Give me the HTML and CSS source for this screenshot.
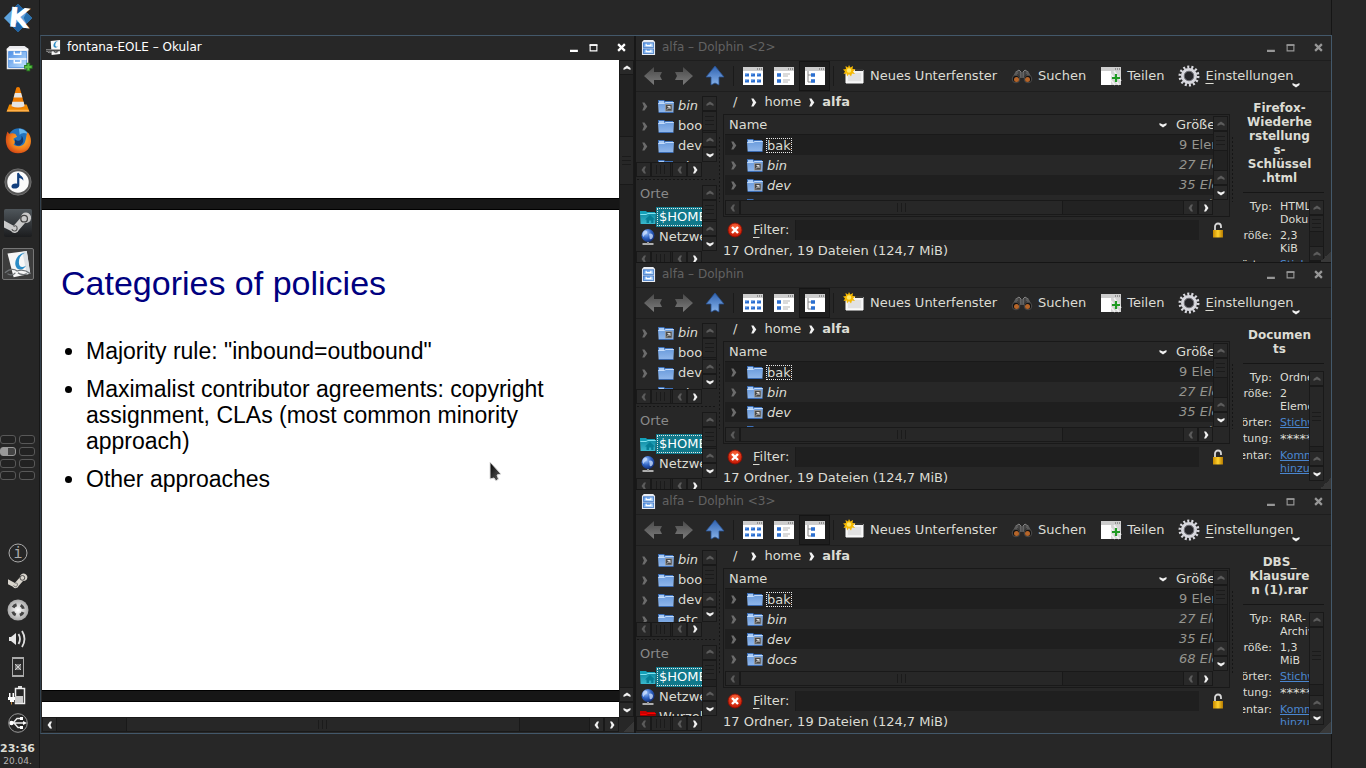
FILE: index.html
```html
<!DOCTYPE html>
<html lang="de">
<head>
<meta charset="utf-8">
<title>fontana-EOLE – Okular</title>
<link rel="stylesheet" href="styles.css">
</head>
<body>
<svg class="sprite" aria-hidden="true">
  <defs>
    <linearGradient id="gFolder" x1="0" y1="0" x2="0" y2="1"><stop offset="0" stop-color="#6a9bdc"/><stop offset="1" stop-color="#8fb6ea"/></linearGradient>
    <linearGradient id="gTeal" x1="0" y1="0" x2="0" y2="1"><stop offset="0" stop-color="#0f8ba3"/><stop offset="1" stop-color="#39b8cd"/></linearGradient>
    <linearGradient id="gUp" x1="0" y1="0" x2="0" y2="1"><stop offset="0" stop-color="#2f62b0"/><stop offset="1" stop-color="#86b2ea"/></linearGradient>
    <linearGradient id="gGrey" x1="0" y1="0" x2="0" y2="1"><stop offset="0" stop-color="#4a4a4a"/><stop offset="1" stop-color="#7c7c7c"/></linearGradient>
    <linearGradient id="gDrawer" x1="0" y1="0" x2="1" y2="1"><stop offset="0" stop-color="#4d8ee6"/><stop offset="1" stop-color="#c4e4ff"/></linearGradient>
    <linearGradient id="gGold" x1="0" y1="0" x2="1" y2="0"><stop offset="0" stop-color="#c98a00"/><stop offset=".5" stop-color="#ffd22e"/><stop offset="1" stop-color="#b57a00"/></linearGradient>
    <linearGradient id="gSteam" x1="0" y1="0" x2="0" y2="1"><stop offset="0" stop-color="#4f565b"/><stop offset="1" stop-color="#1b1c1e"/></linearGradient>
    <linearGradient id="gCursor" x1="0" y1="0" x2="1" y2="1"><stop offset="0" stop-color="#000"/><stop offset="1" stop-color="#666"/></linearGradient>
    <radialGradient id="gGlobe" cx=".35" cy=".3" r=".8"><stop offset="0" stop-color="#9fc6ff"/><stop offset=".5" stop-color="#2f63c4"/><stop offset="1" stop-color="#0b2468"/></radialGradient>
    <radialGradient id="gRed" cx=".5" cy=".3" r=".7"><stop offset="0" stop-color="#ff6a3c"/><stop offset="1" stop-color="#c01200"/></radialGradient>
    <radialGradient id="gFox" cx=".6" cy=".4" r=".7"><stop offset="0" stop-color="#ffc52e"/><stop offset=".6" stop-color="#f07a1c"/><stop offset="1" stop-color="#c93812"/></radialGradient>
    <radialGradient id="gSilver"><stop offset="0" stop-color="#fff"/><stop offset="1" stop-color="#a8a8a8"/></radialGradient>
  </defs>
  <symbol id="right" viewBox="0 0 8 8"><path d="M2 .5h2L6.500 4 4 7.500H2L3.500 4z" fill="currentColor"/></symbol>
  <symbol id="left" viewBox="0 0 8 8"><path d="M6 .5H4L1.500 4 4 7.500h2L4.500 4z" fill="currentColor"/></symbol>
  <symbol id="up" viewBox="0 0 8 8"><path d="M.5 6V4L4 1.500 7.500 4v2L4 4.500z" fill="currentColor"/></symbol>
  <symbol id="down" viewBox="0 0 8 8"><path d="M.5 2v2L4 6.500 7.500 4V2L4 3.500z" fill="currentColor"/></symbol>
  <symbol id="min" viewBox="0 0 8 8"><path d="M0 6h7v2H0z" fill="currentColor"/></symbol>
  <symbol id="max" viewBox="0 0 8 8"><path d="M1 2h6v5H1z" fill="none" stroke="currentColor"/><path d="M.5 1h7v1.500h-7z" fill="currentColor"/></symbol>
  <symbol id="close" viewBox="0 0 8 8"><path d="M1 1l6 6M7 1L1 7" stroke="currentColor" stroke-width="2"/></symbol>

  <symbol id="folder" viewBox="0 0 16 16"><path d="M0 2h6l1 1h8v3H0z" fill="#3d70b8"/><path d="M1 3h5v2H1z" fill="#a9cbf5"/><path d="M0 5h6l2-1h8l-.6 10H.6z" fill="url(#gFolder)"/><path d="M.3 5.500H6l2-1h7.700" stroke="#c3dcfb" fill="none"/><path d="M.6 14.500h15" stroke="#3a6ab0"/></symbol>
  <symbol id="folder-link" viewBox="0 0 16 16"><use href="#folder"/><rect x="7.500" y="6.500" width="6.500" height="6.500" fill="#4a4a4a" stroke="#999" stroke-width=".8"/><path d="M9 11.500l3-3M9.500 8.500H12V11" stroke="#ddd" fill="none"/></symbol>
  <symbol id="home" viewBox="0 0 16 16"><path d="M0 2h6l1 1h8v3H0z" fill="#14a0b8"/><path d="M0 5h6l2-1h8l-.6 11H.6z" fill="url(#gTeal)"/><path d="M.3 5.500H6l2-1h7.700" stroke="#7fe2ef" fill="none"/><path d="M10 6l5 4.500h-1.500V14h-2.300v-2.500H9V14H6.500v-3.500H5z" fill="#067e95"/></symbol>
  <symbol id="globe" viewBox="0 0 16 16"><circle cx="8" cy="6.500" r="6.500" fill="url(#gGlobe)"/><path d="M4 2c2-1 4 0 3 2s-3 1-3 4c-2-1-2-4 0-6zM9 5c2-1 4 0 4 2s-2 4-3 3 0-2-1-5z" fill="#cfe2ff" opacity=".75"/><path d="M2.500 15h11" stroke="#ddd" stroke-width="1.500"/><path d="M8 13v2" stroke="#999" stroke-width="2"/></symbol>
  <symbol id="root" viewBox="0 0 16 16"><path d="M0 2h6l1 1h8v3H0z" fill="#c00"/><path d="M0 5h6l2-1h8l-.6 10H.6z" fill="#9c0000"/><path d="M.3 5.500H6l2-1h7.700" stroke="#f00" fill="none"/></symbol>
  <symbol id="cabinet" viewBox="0 0 16 16"><path d="M3 0h10l2 2v14H1V2z" fill="#e9edf3"/><rect x="2.500" y="3" width="11" height="5" fill="url(#gDrawer)" stroke="#3c74c2" stroke-width=".8"/><rect x="2.500" y="9.500" width="11" height="5" fill="url(#gDrawer)" stroke="#3c74c2" stroke-width=".8"/><path d="M5.500 4v2h5V4M5.500 10.500v2h5v-2" stroke="#fff" stroke-width="1.300" fill="none"/></symbol>
  <symbol id="okular" viewBox="0 0 32 32"><path d="M4 4l22-3 4 26-19 4z" fill="#f7f7f7"/><path d="M26 1l4 26-4 .7L21 2z" fill="#dbe0e4"/><path d="M24 3C14 4 10 16 15 21c4 3 9 0 10-3-5 3-8 1-8-4 0-6 3-9 7-11z" fill="#2b8cc6"/><path d="M1 26c5-4 10-5 14-2 5-2 10-1 15 3M4 27c2 2 7 2 9-1M16 26c2 2 7 3 10 1" stroke="#6f7376" stroke-width="1.500" fill="none"/></symbol>
  <symbol id="okular-small" viewBox="0 0 16 16"><path d="M5 1l10-1v15l-9 1z" fill="#f7f7f7"/><path d="M13 1C9 1 7 5 8.500 7.500 10 9 12 8 12.500 7c-2 .5-3-.5-2.500-2.500.3-2 1.500-3 3-3.500z" fill="#2b8cc6"/><path d="M0 11h15M2 11q2 4 4.500 0M8 11q2.500 4 5 0" stroke="#aaa" stroke-width="2.400" fill="none"/><path d="M0 11h15M2 11q2 4 4.500 0M8 11q2.500 4 5 0" stroke="#333" fill="none"/></symbol>
  <symbol id="steamarm" viewBox="0 0 32 32"><path d="M0 13l11 6 8-9a6 6 0 1 1 5 6l-7 8a5 5 0 0 1-9 1L0 21z" fill="currentColor"/><circle cx="23" cy="11" r="3.800" fill="none" stroke="#444" stroke-width="1.500"/><path d="M9 23c1 3 6 3 6-1s-3-3-4-2" fill="none" stroke="#555" stroke-width="1.300"/></symbol>

  <symbol id="t-back" viewBox="0 0 22 22"><path d="M2 11l10-9v5h8l-2 4 2 4h-8v5z" fill="url(#gGrey)"/></symbol>
  <symbol id="t-forward" viewBox="0 0 22 22"><path d="M20 11L10 2v5H2l2 4-2 4h8v5z" fill="url(#gGrey)"/></symbol>
  <symbol id="t-up" viewBox="0 0 22 22"><path d="M11 1l9 11h-5v8l-4-2-4 2v-8H2z" fill="url(#gUp)" stroke="#274f8e" stroke-width=".8"/></symbol>
  <symbol id="pane" viewBox="0 0 22 22"><path d="M1 2h20v18H1z" fill="#fff"/><path d="M1 2h20v4H1z" fill="#cdcdcd"/><path d="M15 4h1m1 0h1m1 0h1" stroke="#555"/></symbol>
  <symbol id="t-icons" viewBox="0 0 22 22"><use href="#pane"/><path d="M3 10h4m2 0h4m2 0h4M3 16h4m2 0h4m2 0h4" stroke="#2b6fd0" stroke-width="3"/><path d="M3 9h2m4 0h2m4 0h2M3 15h2m4 0h2m4 0h2" stroke="#79aef2"/></symbol>
  <symbol id="t-list" viewBox="0 0 22 22"><use href="#pane"/><path d="M4 10h4m-4 6h4" stroke="#2b6fd0" stroke-width="3.500"/><path d="M10 9h7m-7 2h5m-5 4h7m-7 2h5" stroke="#b5b5b5"/></symbol>
  <symbol id="t-tree" viewBox="0 0 22 22"><use href="#pane"/><path d="M4 6v11h3M4 10h3" stroke="#888" fill="none"/><path d="M7 10h4m-4 6h4" stroke="#2b6fd0" stroke-width="3.500"/></symbol>
  <symbol id="t-newtab" viewBox="0 0 22 22"><path d="M3 5h17v13H3z" fill="#f3f3f3" stroke="#fff"/><path d="M12 4h8v2h-8z" fill="#333"/><path d="M5 8h13v8H5z" fill="#e2e2e2"/><path d="M6 0l1.300 2.500L10 1l-.5 3 3 .5L10 6.500l2 2.500-3-.5L8 11.500 6 9 4 11.500 3.500 8.500l-3 .5L2 6.500 0 4.500 3 4l-.5-3L5 2.500z" fill="#f5b800"/><circle cx="6" cy="5.500" r="2.200" fill="#ffe76a"/></symbol>
  <symbol id="t-find" viewBox="0 0 22 22"><path d="M5 7l3-2 2 2v6M17 7l-3-2-2 2v6" fill="#444" stroke="#858585"/><path d="M6 7L3 13M16 7l3 6" stroke="#5d5d5d" stroke-width="3"/><circle cx="5" cy="14" r="3.800" fill="#111" stroke="#4c4c4c"/><circle cx="17" cy="14" r="3.800" fill="#111" stroke="#4c4c4c"/><circle cx="5.500" cy="14.500" r="2.500" fill="#b5652a"/><circle cx="16.500" cy="14.500" r="2.500" fill="#b5652a"/></symbol>
  <symbol id="t-split" viewBox="0 0 22 22"><use href="#pane"/><path d="M11 6h10v14H11z" fill="#d5d5d5"/><path d="M11 9l8 11M14 6l7 10M11 15l4 5" stroke="#f2f2f2" stroke-width="1.500"/><path d="M16 9v8m-4-4h8" stroke="#1f9a22" stroke-width="2.200"/></symbol>
  <symbol id="t-gear" viewBox="0 0 22 22"><circle cx="11" cy="11" r="9" fill="none" stroke="#d8d8de" stroke-width="3" stroke-dasharray="2.030 2.010"/><circle cx="11" cy="11" r="6.500" fill="#26262a" stroke="#d8d8de" stroke-width="3"/><circle cx="11" cy="11" r="4.800" fill="none" stroke="#77777d"/></symbol>
  <symbol id="stop" viewBox="0 0 16 16"><circle cx="8" cy="8" r="7" fill="url(#gRed)" stroke="#8d0c00" stroke-width=".8"/><path d="M5 5l6 6m0-6l-6 6" stroke="#fff" stroke-width="2.400"/></symbol>
  <symbol id="lock" viewBox="0 0 16 16"><path d="M5 9V4.500a3 3 0 0 1 6 0V6" fill="none" stroke="#d8d8d8" stroke-width="1.800"/><path d="M3 8h10v7.500H3z" fill="url(#gGold)"/></symbol>
</svg>

<div class="desktop">
  <nav class="panel" aria-label="Kontrollleiste">
    <div class="launchers">
      <button class="launch" aria-label="Startmenü"><svg viewBox="0 0 32 32"><path d="M16 1l15 15-15 15L1 16z" fill="#5da3dd"/><path d="M16 1l6 6-6 4-6-4zM16 31l6-6-6-5-6 5z" fill="#1c62a6"/><path d="M31 16l-6-6-3 6 3 6z" fill="#276fae"/><text x="6" y="26" class="k-logo" transform="rotate(6 16 16)">K</text></svg></button>
      <button class="launch" aria-label="Dateiverwaltung"><svg viewBox="0 0 32 32"><path d="M7 2h16l4 3v22H4V5z" fill="#e8e8ec"/><path d="M4 5h23v2H4z" fill="#fafafa"/><path d="M6 8h19v17H6z" fill="url(#gDrawer)" stroke="#5b97e2"/><path d="M6 16h19" stroke="#e6f1ff" stroke-width="2"/><path d="M12 8v3h7V8M12 17v3h7v-3" stroke="#fff" stroke-width="1.500" fill="none"/><path d="M27 20v9m-4.500-4.500h9" stroke="#2a7d22" stroke-width="4"/><path d="M27 21v7m-3.500-3.500h7" stroke="#58c043" stroke-width="2"/></svg></button>
      <button class="launch" aria-label="VLC"><svg viewBox="0 0 32 32"><path d="M6 21h20l3 8H3z" fill="#f08a00"/><path d="M4 27h24l1 2H3z" fill="#ffb04a"/><path d="M14 2q2-2 4 0l6 22q-8 4-16 0z" fill="#f07c00"/><path d="M12.500 8h7l1.500 5H11zM9.500 18h13l1 5q-7.500 3-15 0z" fill="#e4e4e4"/></svg></button>
      <button class="launch" aria-label="Firefox"><svg viewBox="0 0 32 32"><circle cx="17" cy="14" r="12.500" fill="#2373bd"/><path d="M17 2c5 0 9 3 10 6-4-2-7-1-9 1z" fill="#68b5ea"/><path d="M27 6c7 7 5 24-11 24C4 30 0 18 3 8l1-3 2 3c2-1 5-1 7 0l2 3-4 2c0 3 1 3 4 3-1 3-3 2-4 4 3 3 11 3 13-3 2-5 1-8 3-11z" fill="url(#gFox)"/><path d="M13 14c-2 5 0 8 5 7 5-2 5-8 2-11 1 5-4 8-7 4z" fill="#123a70"/></svg></button>
      <button class="launch" aria-label="Musik"><svg viewBox="0 0 32 32"><circle cx="16" cy="16" r="15" fill="#555" stroke="#777"/><circle cx="16" cy="16" r="12.300" fill="#fafafa"/><path d="M15 6l2-.5c1 4 6 4 5 9-1-2-3-3-4.500-3V20c0 4-9 5-9 1 0-3 4-4 6.500-3z" fill="#123f7d"/></svg></button>
      <button class="launch launch-steam" aria-label="Steam"><svg viewBox="0 0 32 32"><rect width="32" height="32" rx="2" fill="url(#gSteam)"/><use href="#steamarm"/></svg></button>
      <button class="launch launch-active" aria-label="Okular"><svg><use href="#okular"/></svg></button>
    </div>
    <div class="pager">
      <i></i><i></i><i class="pager-current"></i><i></i><i></i><i></i><i></i><i></i>
    </div>
    <div class="tray">
      <svg viewBox="0 0 20 20"><circle cx="10" cy="10" r="9" fill="none" stroke="#aaa"/><text x="10" y="15" class="info-glyph">i</text></svg>
      <svg viewBox="0 0 32 32" class="tray-steam"><use href="#steamarm"/></svg>
      <svg viewBox="0 0 22 22" class="tray-big"><circle cx="11" cy="11" r="10.500" fill="url(#gSilver)"/><circle cx="11" cy="11" r="5.500" fill="none" stroke="#444" stroke-width="3" stroke-dasharray="4.320 4.320" stroke-dashoffset="-2.160"/></svg>
      <svg viewBox="0 0 20 20"><path d="M1 8h2l5-4v12l-5-4H1z" fill="#e6e6e6"/><path d="M10.500 5q3 5 0 10M14 2q5 8 0 16" stroke="#ddd" stroke-width="1.800" fill="none"/></svg>
      <svg viewBox="0 0 20 20"><rect x="4.500" y=".5" width="11" height="19" fill="#2a2a2a" stroke="#aaa"/><path d="M4 18h12v2H4zM4 0h12v2H4z" fill="#aaa"/><path d="M7 7l6 6m0-6l-6 6M8 8h4v4H8z" stroke="#ccc" fill="none"/></svg>
      <svg viewBox="0 0 20 20"><path d="M7.500 3.500h9v15h-9z" fill="none" stroke="#eee" stroke-width="1.500"/><path d="M10 1h4v2h-4z" fill="#ddd"/><path d="M7 11h8v7H7z" fill="#ccc"/><path d="M0 12h7v3H6v2H2v-2H0zM1 8h1.500v4H1zM4.500 8H6v4H4.500z" fill="#fff"/><path d="M3.500 17v2.500" stroke="#c78b3c"/></svg>
      <svg viewBox="0 0 20 20"><circle cx="10" cy="10" r="9.300" fill="none" stroke="#999"/><path d="M2 10h14M5 10l4-4.500h3M6 10l4 4.500h3" stroke="#eee" stroke-width="1.400" fill="none"/><circle cx="3.500" cy="10" r="2.200" fill="#fff"/><path d="M15 8l4 2-4 2zM12 4h3v3h-3zM12 13h3v3h-3z" fill="#fff"/></svg>
    </div>
    <div class="clock"><time class="clock-time">23:36</time><span class="clock-date">20.04.</span></div>
  </nav>

  <main class="workspace">
    <section class="window okular" aria-label="Okular">
      <header class="titlebar">
        <svg class="title-icon"><use href="#okular-small"/></svg>
        <h1 class="title-text">fontana-EOLE – Okular</h1>
        <button class="winbtn" aria-label="Minimieren"><svg><use href="#min"/></svg></button>
        <button class="winbtn" aria-label="Maximieren"><svg><use href="#max"/></svg></button>
        <button class="winbtn winbtn-close" aria-label="Schließen"><svg><use href="#close"/></svg></button>
      </header>
      <div class="okular-body">
        <div class="pages">
          <div class="page"></div>
          <article class="page page-current">
            <h2 class="slide-title">Categories of policies</h2>
            <ul class="slide-list">
              <li>Majority rule: "inbound=outbound"</li>
              <li>Maximalist contributor agreements: copyright assignment, CLAs (most common minority approach)</li>
              <li>Other approaches</li>
            </ul>
          </article>
          <div class="page"></div>
          <svg class="cursor" viewBox="0 0 14 22"><path d="M1 1l11 12-4 1 1.500 4L7 20l-2-3-4 1z" fill="url(#gCursor)" stroke="#ddd"/></svg>
        </div>
        <div class="sb sb-v">
          <button class="on" aria-label="Nach oben"><svg><use href="#up"/></svg></button>
          <div class="trough"><i style="flex-basis:10%"></i><b style="flex-basis:8%"></b></div>
          <button class="on" aria-label="Nach oben"><svg><use href="#up"/></svg></button>
          <button class="on" aria-label="Nach unten"><svg><use href="#down"/></svg></button>
        </div>
        <div class="sb sb-h">
          <button class="on" aria-label="Nach links"><svg><use href="#left"/></svg></button>
          <div class="trough"><i style="flex-basis:13%"></i><b style="flex-basis:74%"></b></div>
          <button class="on" aria-label="Nach links"><svg><use href="#left"/></svg></button>
          <button class="on" aria-label="Nach rechts"><svg><use href="#right"/></svg></button>
        </div>
        <span class="grip"></span>
      </div>
    </section>
    <div class="dolphins" id="dolphins"></div>
  </main>
</div>
<script src="app.js"></script>
</body>
</html>
```
FILE: app.js
```js
const icon = (name, cls = '') => `<svg class="${cls}"><use href="#${name}"/></svg>`;

function scrollbar(dir, thumb) {
  const [less, more] = dir === 'v' ? ['up', 'down'] : ['left', 'right'];
  const size = thumb ? ` style="flex-basis:${thumb}%"` : '';
  return `<div class="sb sb-${dir}">
    <button aria-label="Zurück">${icon(less)}</button>
    <div class="trough"><b${size}></b></div>
    <button aria-label="Zurück">${icon(less)}</button>
    <button class="on" aria-label="Weiter">${icon(more)}</button>
  </div>`;
}

const tools = [['t-back', 'Zurück'], ['t-forward', 'Vorwärts'], ['t-up', 'Aufwärts'], null,
  ['t-icons', 'Symbole'], ['t-list', 'Kompakt'], ['t-tree', 'Details', 'tool-pressed'], null];
const labelled = [['t-newtab', 'Neues Unterfenster'], ['t-find', 'Suchen'], ['t-split', 'Teilen'],
  ['t-gear', '<u>E</u>instellungen']];
const tree = [['bin', 'folder-link'], ['boot', 'folder'], ['dev', 'folder'], ['etc', 'folder']];
const places = [['$HOME', 'home'], ['Netzwerk', 'globe'], ['Wurzel', 'root']];
const files = [['bak', '9 Elemente'], ['bin', '27 Elemente'], ['dev', '35 Elemente'], ['docs', '68 Elemente']];

const windows = [
  { title: 'alfa – Dolphin <2>', name: ['Firefox-', 'Wiederhe', 'rstellung', 's-', 'Schlüssel', '.html'],
    type: ['HTML-', 'Dokument'], size: ['2,3', 'KiB'], thumb: 56 },
  { title: 'alfa – Dolphin', name: ['Documen', 'ts'], type: ['Ordner'], size: ['2', 'Elemente'], thumb: 94 },
  { title: 'alfa – Dolphin <3>', name: ['DBS_', 'Klausure', 'n (1).rar'],
    type: ['RAR-', 'Archiv'], size: ['1,3', 'MiB'], thumb: 86 },
];

const escape = s => s.replace(/</g, '&lt;').replace(/>/g, '&gt;');

function dolphin(w, n) {
  const facts = [['Typ:', w.type.join('<br>')], ['Größe:', w.size.join('<br>')],
    ['Stichwörter:', '<a href="#">Stichwörter</a>'], ['Bewertung:', '<span class="stars">*****</span>'],
    ['Kommentar:', '<a href="#">Kommentar<br>hinzufügen</a>']];
  return `<section class="window dolphin" aria-label="${escape(w.title)}">
  <header class="titlebar">
    ${icon('cabinet', 'title-icon')}
    <h2 class="title-text">${escape(w.title)}</h2>
    <button class="winbtn" aria-label="Minimieren">${icon('min')}</button>
    <button class="winbtn" aria-label="Maximieren">${icon('max')}</button>
    <button class="winbtn winbtn-close" aria-label="Schließen">${icon('close')}</button>
  </header>
  <div class="toolbar">
    ${tools.map(t => t ? `<button class="tool ${t[2] || ''}" aria-label="${t[1]}">${icon(t[0])}</button>`
      : '<span class="tool-sep"></span>').join('')}
    ${labelled.map(t => `<button class="tool tool-labelled">${icon(t[0])}<span>${t[1]}</span></button>`).join('')}
    ${icon('down', 'tool-more')}
  </div>
  <div class="dolphin-body">
    <aside class="side">
      <div class="side-pane">
        <ul class="tree">${tree.map(([t, i]) => `<li class="${i}">${icon('right', 'twist')}${icon(i, 'ico')}<span>${t}</span></li>`).join('')}</ul>
        ${scrollbar('v')}
      </div>
      ${scrollbar('h')}
      <div class="dots-h"></div>
      <div class="side-pane">
        <div class="places"><h3>Orte</h3><ul>${places.map(([t, i]) => `<li class="${i}">${icon(i, 'ico')}<span>${t}</span></li>`).join('')}</ul></div>
        ${scrollbar('v')}
      </div>
      ${scrollbar('h')}
    </aside>
    <div class="dots-v"></div>
    <div class="centre">
      <nav class="crumbs"><a href="#">/</a>${icon('right')}<a href="#">home</a>${icon('right')}<a href="#" class="here">alfa</a></nav>
      <div class="view">
        <div class="rows"><table>
          <thead><tr><th>Name ${icon('down')}</th><th class="size">Größe</th></tr></thead>
          <tbody>${files.map(([f, s], i) => `<tr class="${i ? 'linked' : ''}"><td><div class="cell">${icon('right', 'twist')}${icon(i ? 'folder-link' : 'folder', 'ico')}<span class="fname">${f}</span></div></td><td class="size">${s}</td></tr>`).join('')}</tbody>
        </table></div>
        ${scrollbar('v')}
        ${scrollbar('h', 73)}
      </div>
      <div class="filter">
        <button aria-label="Filter schließen">${icon('stop')}</button>
        <label for="filter${n}"><u>F</u>ilter:</label>
        <input type="text" id="filter${n}">
        <button aria-label="Filter beibehalten">${icon('lock')}</button>
      </div>
      <p class="status">17 Ordner, 19 Dateien (124,7 MiB)</p>
    </div>
    <div class="dots-v"></div>
    <aside class="info">
      <h3>${w.name.join('<br>')}</h3>
      <div class="facts">
        <dl>${facts.map(([k, v]) => `<dt><span>${k}</span></dt><dd>${v}</dd>`).join('')}</dl>
        ${scrollbar('v', w.thumb)}
      </div>
    </aside>
  </div>
  <span class="grip"></span>
</section>`;
}

document.getElementById('dolphins').innerHTML = windows.map(dolphin).join('');
```
FILE: styles.css
```css
* { box-sizing: border-box; }
html, body { height: 100%; margin: 0; }
body {
  background: #272727;
  color: #dcdcd4;
  font: 13px/20px "DejaVu Sans", sans-serif;
  overflow: hidden;
}
h1, h2, h3, p, ul, dl, dd { margin: 0; padding: 0; font: inherit; }
ul { list-style: none; }
button { margin: 0; padding: 0; border: 0; background: none; color: inherit; font: inherit; }
svg { display: block; flex: none; }
a { color: inherit; text-decoration: none; }
u { text-underline-offset: 3px; }
.sprite { position: absolute; width: 0; height: 0; }

.desktop {
  display: grid;
  grid-template: minmax(0, 1fr) / 40px minmax(0, 1fr) 34px;
  height: 100vh;
  background: linear-gradient(#151515, #151515) right 34px top 0 / 1px 100% no-repeat;
}

/* Panel */
.panel {
  display: flex;
  flex-direction: column;
  align-items: center;
  padding: 2px 4px 0 0;
  background: #262626;
  border-right: 1px solid #171717;
}
.launchers { display: flex; flex-direction: column; gap: 9px; align-items: center; }
.launch { width: 32px; height: 32px; padding: 1px; }
.launch svg { width: 30px; height: 30px; }
.launch:nth-child(n+3):not(.launch-active) svg { width: 28px; height: 28px; margin: 0 1px; }
.launch-steam { color: #c9c9c9; }
.launch-active { border: 1px solid #777; border-radius: 2px; background: #3d3d3d; }
.launch-active svg { width: 28px; height: 28px; }
.k-logo { font: bold 29px "DejaVu Sans", sans-serif; fill: #fff; }
.pager { display: grid; grid-template-columns: 16px 16px; grid-auto-rows: 9px; gap: 3px; margin-top: 155px; }
.pager i { border: 1px solid #585858; border-radius: 3px; background: #222; }
.pager .pager-current { border-color: #999; background: linear-gradient(90deg, #999 50%, #444 50%); }
.tray { display: flex; flex-direction: column; align-items: center; gap: 8px; margin-top: auto; }
.tray svg { width: 20px; height: 20px; }
.tray .tray-big { width: 22px; height: 22px; }
.tray-steam { color: #d8d4cc; }
.info-glyph { font: 15px "DejaVu Sans Mono", monospace; fill: #aaa; text-anchor: middle; }
.clock { display: flex; flex-direction: column; align-items: center; padding-top: 9px; line-height: 13px; }
.clock-time { font-size: 11px; font-weight: bold; }
.clock-date { font-size: 9px; color: #b4b4b4; }

/* Windows */
.workspace {
  display: grid;
  grid-template: minmax(0, 1fr) / 595fr 695fr;
  margin: 35px 0 34px;
  border: 1px solid #43586a;
  border-left-color: #33414d;
  min-width: 0;
  background: #272727;
}
.window { display: flex; flex-direction: column; min-width: 0; min-height: 0; }
.titlebar { display: flex; align-items: center; flex: none; height: 24px; padding: 0 3px 2px 5px; }
.title-icon { width: 15px; height: 15px; margin-right: 6px; }
.title-text { flex: 1; font-size: 12px; }
.winbtn { display: grid; place-items: center; width: 19px; height: 16px; }
.winbtn svg { width: 9px; height: 9px; }
.winbtn-close { margin-left: 9px; }
.grip { width: 11px; height: 11px; background: linear-gradient(135deg, transparent 50%, #383838 50%); }

.okular { border-right: 2px solid #171717; color: #fff; }
.okular-body { flex: 1; display: grid; grid-template: minmax(0, 1fr) 15px / minmax(0, 1fr) 15px; min-height: 0; padding: 0 0 1px 1px; }
.okular-body > .grip { place-self: end; }
.pages { position: relative; display: grid; grid-template-rows: minmax(0, 138fr) minmax(0, 480fr) minmax(0, 15fr); gap: 12px; overflow: hidden; background: #161616; }
.page { background: #fff; box-shadow: 0 0 0 1px #000; color: #000; }
.page-current { padding: 53px 40px 0 19px; }
.slide-title { font: 34px/40px "Liberation Sans", Arial, sans-serif; color: #000080; }
.slide-list { display: flex; flex-direction: column; gap: 12px; margin-top: 35px; padding-left: 25px; list-style: disc; font: 23px/26px "Liberation Sans", Arial, sans-serif; }
.cursor { position: absolute; left: 447px; top: 401px; width: 14px; height: 22px; }

/* Scroll bars */
.sb { display: flex; flex: none; min-width: 0; color: #5c5c5c; }
.sb-v { flex-direction: column; width: 15px; min-height: 75px; }
.sb-h { height: 15px; }
.sb button { flex: none; display: grid; place-items: center; width: 15px; height: 15px; border: 1px solid #191919; background: #292929; }
.sb svg { width: 8px; height: 8px; }
.sb .on { color: #f2f2f2; }
.trough { flex: 1; display: flex; min-width: 0; min-height: 0; background: #222; border: 0 solid #191919; }
.sb-v .trough { flex-direction: column; border-width: 0 1px; }
.sb-h .trough { border-width: 1px 0; }
.trough i { flex: none; }
.trough b { flex: 0 0 20px; border: 0 solid #191919; background: no-repeat center #272727; }
.sb-v b { border-width: 1px 0; background-image: repeating-linear-gradient(#1b1b1b 0 1px, transparent 1px 4px); background-size: 9px 10px; }
.sb-h b { border-width: 0 1px; background-image: repeating-linear-gradient(90deg, #1b1b1b 0 1px, transparent 1px 4px); background-size: 10px 9px; }

/* File manager */
.dolphins { display: grid; grid-template-rows: minmax(0, 226fr) minmax(0, 227fr) minmax(0, 244fr); min-width: 0; min-height: 0; }
.dolphin { position: relative; overflow: hidden; }
.dolphin + .dolphin { border-top: 1px solid #151515; }
.dolphin .titlebar { color: #626262; }
.dolphin .winbtn { color: #979797; }
.dolphin > .grip { position: absolute; right: 0; bottom: 0; }
.toolbar { flex: none; display: flex; align-items: center; height: 32px; padding-left: 1px; border: solid #1e1e1e; border-width: 1px 0; white-space: nowrap; }
.tool { display: flex; align-items: center; justify-content: center; gap: 5px; width: 31px; height: 30px; }
.tool svg { width: 22px; height: 22px; }
.tool-pressed { border: 1px solid #151515; background: #1e1e1e; }
.tool-sep { width: 1px; height: 20px; margin: 0 3px; background: #1a1a1a; }
.tool-labelled { width: auto; padding: 0 8px 0 6px; }
.toolbar .tool-more { align-self: end; width: 8px; height: 8px; margin: 0 0 2px -10px; color: #f2f2f2; }
.dolphin-body { flex: 1; display: flex; min-height: 0; padding-right: 7px; }
.twist { width: 9px; height: 9px; color: #6c6c6c; }
.ico { width: 16px; height: 16px; }

.side { flex: none; display: flex; flex-direction: column; width: 81px; padding: 4px 0 2px; }
.side-pane { flex: 1 0 66px; display: flex; height: 66px; }
.side-pane > .sb { min-height: 0; }
.side > .sb { width: 66px; }
.tree, .places { flex: 1; overflow: hidden; white-space: nowrap; }
.tree li { display: flex; align-items: center; gap: 4px; height: 20px; padding-left: 4px; }
.tree .twist { margin-right: 5px; }
.tree .folder-link { font-style: italic; }
.places h3 { height: 22px; padding: 0 4px; line-height: 18px; color: #8a8a8a; }
.places li { display: flex; align-items: center; height: 20px; padding-left: 4px; gap: 3px; }
.places .home { gap: 0; }
.places .home span { flex: 1; height: 20px; padding-left: 3px; background: #11788a; line-height: 19px; outline: 1px dotted #e8e8e8; outline-offset: -2px; color: #fff; }
.dots-h { flex: none; height: 8px; background: radial-gradient(circle, #151515 1px, transparent 1px) 8px 0 / 4px 5px repeat-x; }
.dots-v { flex: none; width: 6px; margin: 44px 0 60px; background: radial-gradient(circle, #151515 1px, transparent 1px) 0 0 / 5px 4px repeat-y; }

.centre { flex: 1; display: flex; flex-direction: column; min-width: 0; }
.crumbs { flex: none; display: flex; align-items: center; gap: 6px; height: 22px; padding: 0 10px 2px; }
.crumbs svg { width: 9px; height: 9px; color: #f2f2f2; }
.crumbs svg:nth-of-type(1) { margin-left: 6px; }
.crumbs .here { font-weight: bold; }
.view { flex: 1; display: grid; grid-template: minmax(0, 1fr) 15px / minmax(0, 1fr) 15px; min-height: 0; padding: 1px; border: 1px solid #191919; }
.rows { overflow: hidden; }
.rows table { width: 100%; table-layout: fixed; border-spacing: 0; white-space: nowrap; }
.rows th { height: 19px; padding: 0 4px; border-bottom: 1px solid #191919; text-align: left; font-weight: normal; line-height: 18px; }
.rows th svg { float: right; width: 8px; height: 8px; margin: 5px 5px 0 0; color: #f2f2f2; }
.rows .size { width: 37px; padding: 0; overflow: hidden; }
.rows td { height: 20px; padding: 0; }
.rows td.size { color: #95958f; padding-left: 3px; }
.rows tbody tr:nth-child(odd) td { background: #1f1f1f; }
.linked { font-style: italic; }
.cell { display: flex; align-items: center; gap: 3px; padding-left: 4px; }
.cell .twist { margin-right: 6px; }
.fname { line-height: 15px; padding: 0 1px; }
tr:not(.linked) .fname { outline: 1px dotted #e8e8e8; outline-offset: -1px; }
.filter { flex: none; display: flex; align-items: center; height: 24px; padding: 2px 4px 0; }
.filter button, .filter svg { width: 16px; height: 16px; }
.filter label { padding: 0 6px 0 10px; }
.filter input { flex: 1; min-width: 0; height: 20px; margin-right: 11px; border: 0; border-left: 1px solid #1a1a1a; background: #1f1f1f; color: inherit; font: inherit; }
.status { flex: none; height: 21px; line-height: 20px; }

.info { flex: none; display: flex; flex-direction: column; width: 88px; padding: 9px 0 8px 7px; }
.info h3 { flex: none; padding: 0 8px 7px 0; border-bottom: 1px solid #161616; font-weight: bold; font-size: 12px; line-height: 14px; text-align: center; }
.facts { flex: 1 0 0; display: flex; min-height: 83px; padding-top: 7px; }
.facts dl { flex: 1; display: grid; grid-template-columns: 29px minmax(0, 1fr); grid-auto-rows: max-content; gap: 3px 8px; overflow: hidden; font-size: 11px; line-height: 13px; white-space: nowrap; }
.facts dt { display: flex; justify-content: flex-end; overflow: hidden; }
.facts dd { overflow: hidden; }
.facts a { color: #4a86cf; text-decoration: underline; }
.stars { font-size: 13px; }
```
